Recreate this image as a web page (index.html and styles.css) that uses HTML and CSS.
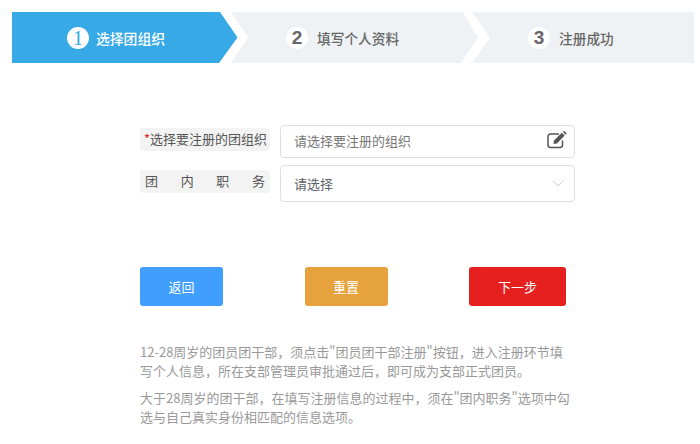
FILE: index.html
```html
<!DOCTYPE html>
<html lang="zh">
<head>
<meta charset="utf-8">
<title>选择团组织</title>
<link rel="stylesheet" href="styles.css">
</head>
<body>
<ol class="steps">
  <li class="step step-first step-active"><span class="num">1</span><span class="step-text">选择团组织</span></li>
  <li class="step step-second"><span class="num">2</span><span class="step-text">填写个人资料</span></li>
  <li class="step step-third"><span class="num">3</span><span class="step-text">注册成功</span></li>
</ol>
<main class="content">
  <form class="form">
    <div class="row row-one">
      <label class="label"><span class="req">*</span>选择要注册的团组织</label>
      <div class="field field-one">
        <span class="placeholder">请选择要注册的组织</span>
        <svg class="edit-icon" width="20" height="18" viewBox="0 0 20 18" aria-hidden="true">
          <path d="M15.5 9.500v4.600a2.400 2.400 0 0 1-2.400 2.400H3.400A2.400 2.400 0 0 1 1 14.100V5.400A2.400 2.400 0 0 1 3.400 3H12" fill="none" stroke="#555" stroke-width="1.500"/>
          <path d="M7 9.500 14.800 1.700l2.900 2.900L9.900 12.400 6.500 13z" fill="#555"/>
          <path d="M15.800.8l.8-.6a.8.8 0 0 1 1 0l1.700 1.700a.8.8 0 0 1 0 1l-.7.800z" fill="#555"/>
        </svg>
      </div>
    </div>
    <div class="row row-two">
      <label class="label label-just">团内职务</label>
      <div class="field field-two">
        <span class="value">请选择</span>
        <svg class="chev" width="12" height="7" viewBox="0 0 12 7" aria-hidden="true"><path d="M1 1l5 5 5-5" fill="none" stroke="#c8ccd3" stroke-width="1"/></svg>
      </div>
    </div>
    <div class="buttons">
      <button type="button" class="btn btn-back">返回</button>
      <button type="button" class="btn btn-reset">重置</button>
      <button type="button" class="btn btn-next">下一步</button>
    </div>
    <div class="notes">
      <p>12-28周岁的团员团干部，须点击"团员团干部注册"按钮，进入注册环节填写个人信息，所在支部管理员审批通过后，即可成为支部正式团员。</p>
      <p>大于28周岁的团干部，在填写注册信息的过程中，须在"团内职务"选项中勾选与自己真实身份相匹配的信息选项。</p>
    </div>
  </form>
</main>
</body>
</html>
```
FILE: styles.css
```css
* { box-sizing: border-box; }
html, body { margin: 0; padding: 0; background: #fff; }
body {
  width: 700px;
  height: 444px;
  overflow: hidden;
  padding: 12px 6px 0 12px;
  font-family: "Noto Sans CJK SC", "Liberation Sans", sans-serif;
}
.steps {
  display: flex;
  margin: 0;
  padding: 0;
  list-style: none;
  height: 51px;
}
.step {
  display: flex;
  align-items: center;
  height: 51px;
  background: #eff2f5;
  color: #666;
  font-size: 14px;
  font-weight: 500;
}
.step-first {
  width: 225.5px;
  padding-left: 55px;
  clip-path: polygon(0 0, 208px 0, 225.5px 50%, 207px 100%, 0 100%);
}
.step-second {
  width: 247px;
  margin-left: -6.5px;
  padding-left: 55px;
  clip-path: polygon(0 0, 232px 0, 247px 50%, 230px 100%, 0 100%, 17px 50%);
}
.step-third {
  width: 222px;
  margin-left: -6px;
  padding-left: 56px;
  clip-path: polygon(0 0, 100% 0, 100% 100%, 0 100%, 18px 50%);
}
.step-active { background: #36a9e6; color: #fff; }
.num {
  flex: none;
  width: 22px;
  height: 22px;
  margin-right: 7px;
  border-radius: 50%;
  background: #fff;
  color: #666;
  font-family: "Liberation Sans", sans-serif;
  font-size: 19px;
  font-weight: 400;
  line-height: 22px;
  text-align: center;
}
.step-second .num, .step-third .num { font-weight: 700; margin-right: 9px; }
.step-active .num {
  color: #36a9e6;
  font-family: "Liberation Serif", serif;
  font-size: 21px;
}
.step-text { line-height: 20px; }
.step-first .step-text { font-size: 13.800px; }
.step-second .step-text, .step-third .step-text { font-size: 13.700px; }
.content { padding: 62px 0 0 128px; }
.form { width: 435px; }
.row { display: flex; align-items: flex-start; }
.row-one { height: 33px; }
.row-two { height: 37px; margin-top: 7px; }
.label {
  flex: none;
  width: 130px;
  height: 23px;
  padding: 0 4px;
  margin-right: 10px;
  border-radius: 4px;
  background: #f3f3f3;
  color: #555;
  font-size: 13px;
  line-height: 22px;
  white-space: nowrap;
}
.row-one .label { margin-top: 3px; }
.row-two .label { margin-top: 5px; }
.label-just { padding: 0 5px; text-align: justify; text-align-last: justify; }
.req { color: #e6201f; }
.field {
  display: flex;
  align-items: center;
  justify-content: space-between;
  width: 295px;
  border: 1px solid #dcdfe6;
  border-radius: 4px;
  background: #fff;
  padding: 0 7px 2px 13px;
  font-size: 13px;
}
.field-one { height: 33px; }
.field-two { height: 37px; padding-right: 10px; padding-bottom: 1px; }
.placeholder { color: #777; }
.value { color: #606266; }
.edit-icon { margin-top: -2px; }
.buttons {
  display: flex;
  justify-content: space-between;
  width: 426px;
  margin-top: 65px;
}
.btn {
  height: 39px;
  border: 1px solid transparent;
  border-radius: 3px;
  color: #fff;
  font: inherit;
  font-size: 13px;
  padding: 0 0 1px;
}
.btn-back { width: 83px; background: #409eff; }
.btn-reset { width: 83px; background: #e6a23c; }
.btn-next { width: 97px; background: #e6201f; }
.notes {
  margin-top: 36px;
  color: #999;
  font-size: 13px;
  line-height: 19px;
}
.notes p { margin: 0 0 8px; }
```
